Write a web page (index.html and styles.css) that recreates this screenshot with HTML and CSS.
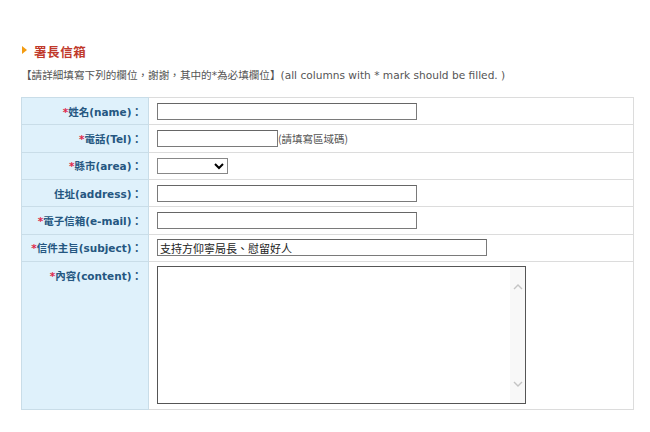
FILE: index.html
```html
<!DOCTYPE html>
<html lang="zh-Hant">
<head>
<meta charset="utf-8">
<title>署長信箱</title>
<link rel="stylesheet" href="styles.css">
</head>
<body>
<div class="page">
  <h2 class="title"><span class="arrow"></span>署長信箱</h2>
  <p class="note">【請詳細填寫下列的欄位，謝謝，其中的*為必填欄位】(all columns with * mark should be filled. )</p>
  <table class="form">
    <tr>
      <th><span class="req">*</span>姓名(name)：</th>
      <td><input class="in w-long" type="text"></td>
    </tr>
    <tr>
      <th><span class="req">*</span>電話(Tel)：</th>
      <td><input class="in w-short" type="text"><span class="hint">(請填寫區域碼)</span></td>
    </tr>
    <tr>
      <th><span class="req">*</span>縣市(area)：</th>
      <td><select class="sel"><option></option></select></td>
    </tr>
    <tr>
      <th>住址(address)：</th>
      <td><input class="in w-long" type="text"></td>
    </tr>
    <tr>
      <th><span class="req">*</span>電子信箱(e-mail)：</th>
      <td><input class="in w-long" type="text"></td>
    </tr>
    <tr>
      <th><span class="req">*</span>信件主旨(subject)：</th>
      <td><input class="in w-wide" type="text" value="支持方仰寧局長、慰留好人"></td>
    </tr>
    <tr class="tall">
      <th><span class="req">*</span>內容(content)：</th>
      <td>
        <div class="ta-wrap">
          <textarea class="ta"></textarea>
          <div class="sb">
            <svg class="chev" width="10" height="6" viewBox="0 0 10 6"><path d="M1 5 L5 1 L9 5" fill="none" stroke="#c4c4c4" stroke-width="1.4"/></svg>
            <svg class="chev" width="10" height="6" viewBox="0 0 10 6"><path d="M1 1 L5 5 L9 1" fill="none" stroke="#c4c4c4" stroke-width="1.4"/></svg>
          </div>
        </div>
      </td>
    </tr>
  </table>
</div>
</body>
</html>
```
FILE: styles.css
```css
html, body {
  margin: 0;
  padding: 0;
  background: #ffffff;
}
body {
  font-family: "DejaVu Sans", "Noto Sans CJK TC", sans-serif;
  color: #444;
}
.page {
  padding: 41px 16px 0 21px;
}
.title {
  margin: 0;
  height: 20px;
  display: flex;
  align-items: center;
  font-size: 12.5px;
  font-weight: bold;
  color: #c0392b;
  font-family: "Noto Sans CJK TC", sans-serif;
  letter-spacing: 0.6px;
}
.arrow {
  display: inline-block;
  width: 0;
  height: 0;
  border-top: 4px solid transparent;
  border-bottom: 4px solid transparent;
  border-left: 5px solid #f39c12;
  margin: 0 7px 3px 1px;
}
.note {
  margin: 6px 0 0 0;
  font-size: 10.6px;
  line-height: 16px;
  color: #555;
}
.form {
  margin-top: 14px;
  width: 613px;
  border-collapse: collapse;
  border: 1px solid #d6e4ec;
  table-layout: fixed;
}
.form th {
  width: 120px;
  background: #dff1fb;
  border: 1px solid #c9dde8;
  text-align: right;
  padding: 0 6px 0 0;
  height: 26.33px;
  font-size: 10.5px;
  font-weight: bold;
  color: #255781;
  white-space: nowrap;
  vertical-align: middle;
}
.form td {
  border: 1px solid #dcdcdc;
  padding: 0 0 0 8px;
  height: 26.33px;
  vertical-align: middle;
  font-size: 11px;
}
.req {
  color: #e0284a;
}
.tall th {
  height: 141px;
  vertical-align: top;
  padding-top: 6px;
}
.tall td {
  vertical-align: top;
  padding-top: 4px;
}
.in {
  box-sizing: border-box;
  height: 17px;
  border: 1px solid #7a7a7a;
  border-top-color: #666;
  padding: 0 2px;
  font-size: 11px;
  font-family: "Noto Sans CJK TC", sans-serif;
  color: #222;
  vertical-align: middle;
  margin: 0;
}
.w-long { width: 260px; }
.w-short { width: 121px; }
.w-wide { width: 330px; }
.hint {
  font-size: 10.5px;
  color: #555;
  font-family: "Noto Sans CJK TC", sans-serif;
  vertical-align: middle;
}
.sel {
  box-sizing: border-box;
  width: 71px;
  height: 16px;
  border: 1px solid #888;
  background: #fff;
  margin: 0;
  font-size: 11px;
  vertical-align: middle;
}
.ta-wrap {
  position: relative;
  width: 369px;
  height: 138px;
}
.ta {
  box-sizing: border-box;
  display: block;
  width: 369px;
  height: 138px;
  border: 1px solid #555;
  margin: 0;
  resize: none;
  overflow: hidden;
}
.sb {
  position: absolute;
  top: 1px;
  right: 1px;
  bottom: 1px;
  width: 15px;
  background: #f8f8f8;
  display: flex;
  flex-direction: column;
  align-items: center;
  justify-content: space-between;
  padding: 17px 0 16px;
  box-sizing: border-box;
}
.chev {
  display: block;
}
```
